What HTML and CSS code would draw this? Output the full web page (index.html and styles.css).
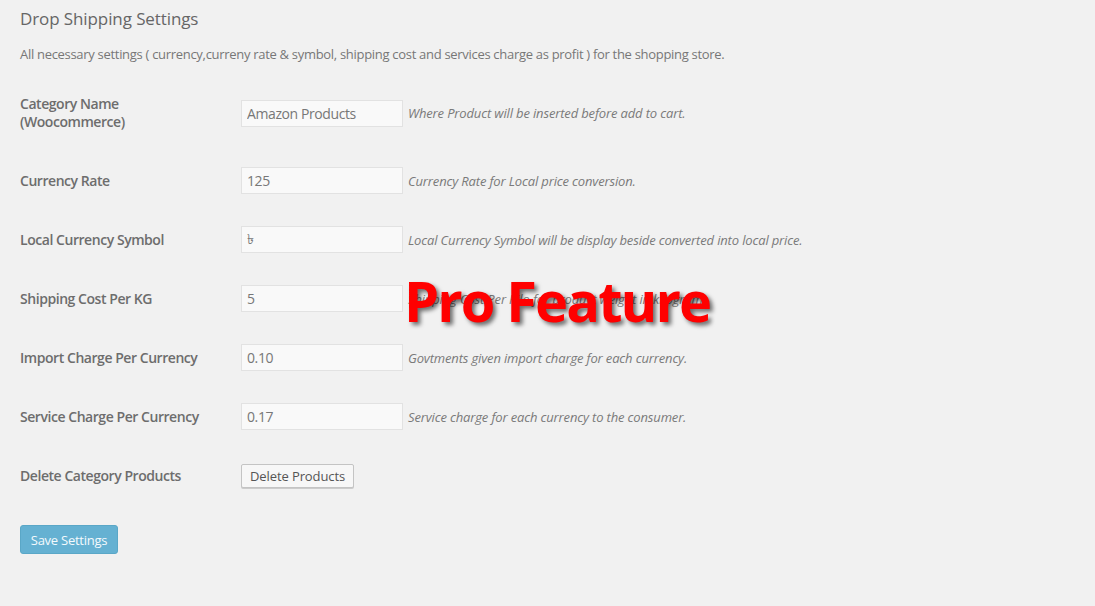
FILE: index.html
```html
<!DOCTYPE html>
<html lang="en">
<head>
<meta charset="utf-8">
<title>Drop Shipping Settings</title>
<link rel="stylesheet" href="styles.css">
</head>
<body>
<div class="wrap">
  <h2 class="title">Drop Shipping Settings</h2>
  <p class="intro">All necessary settings ( currency,curreny rate &amp; symbol, shipping cost and services charge as profit ) for the shopping store.</p>
  <div class="form">
    <div class="row row-tall">
      <div class="label">Category Name<br>(Woocommerce)</div>
      <div class="field"><input class="text" type="text" value="Amazon Products"><span class="desc">Where Product will be inserted before add to cart.</span></div>
    </div>
    <div class="row">
      <div class="label">Currency Rate</div>
      <div class="field"><input class="text" type="text" value="125"><span class="desc">Currency Rate for Local price conversion.</span></div>
    </div>
    <div class="row">
      <div class="label">Local Currency Symbol</div>
      <div class="field"><input class="text" type="text" value="৳"><span class="desc">Local Currency Symbol will be display beside converted into local price.</span></div>
    </div>
    <div class="row">
      <div class="label">Shipping Cost Per KG</div>
      <div class="field"><input class="text" type="text" value="5"><span class="desc">Shipping Cost Per Kilo for product weight in kilogram.</span>
        <span class="pro">Pro Feature</span></div>
    </div>
    <div class="row">
      <div class="label">Import Charge Per Currency</div>
      <div class="field"><input class="text" type="text" value="0.10"><span class="desc">Govtments given import charge for each currency.</span></div>
    </div>
    <div class="row">
      <div class="label">Service Charge Per Currency</div>
      <div class="field"><input class="text" type="text" value="0.17"><span class="desc">Service charge for each currency to the consumer.</span></div>
    </div>
    <div class="row">
      <div class="label">Delete Category Products</div>
      <div class="field"><button class="btn" type="button">Delete Products</button></div>
    </div>
  </div>
  <div class="submit"><button class="btn-primary" type="button">Save Settings</button></div>
</div>
</body>
</html>
```
FILE: styles.css
```css
html, body {
  margin: 0;
  padding: 0;
  background: #f1f1f1;
}
body {
  font-family: "Open Sans", "Noto Sans", sans-serif;
  color: #666;
  font-size: 13px;
}
.wrap {
  padding: 0 20px;
}
.title {
  margin: 0;
  padding-top: 7px;
  font-size: 17px;
  line-height: 24px;
  font-weight: 400;
  letter-spacing: -0.1px;
  color: #666;
}
.intro {
  margin: 13px 0 0;
  font-size: 13px;
  line-height: 20px;
  letter-spacing: -0.3px;
  color: #777;
}
.form {
  margin-top: 11px;
}
.row {
  display: flex;
  align-items: center;
  min-height: 59px;
}
.row-tall {
  min-height: 76px;
}
.label {
  width: 221px;
  flex: none;
  font-size: 14px;
  line-height: 18px;
  font-weight: 600;
  letter-spacing: -0.45px;
  color: #6d6d6d;
}
.field {
  position: relative;
  display: flex;
  align-items: center;
}
.text {
  box-sizing: border-box;
  width: 162px;
  height: 27px;
  margin: 0;
  padding: 0 5px;
  border: 1px solid #e2e2e2;
  background: #f9f9f9;
  font-family: inherit;
  font-size: 14px;
  letter-spacing: -0.4px;
  color: #777;
  outline: none;
}
.desc {
  margin-left: 5px;
  font-style: italic;
  font-size: 13px;
  letter-spacing: -0.15px;
  color: #7a7a7a;
}
.btn {
  height: 24px;
  padding: 0 8px;
  border: 1px solid #c4c4c4;
  border-radius: 2px;
  background: #f7f7f7;
  box-shadow: 0 1px 0 #ccc;
  font-family: inherit;
  font-size: 13px;
  letter-spacing: -0.1px;
  color: #555;
}
.submit {
  margin-top: 20px;
}
.btn-primary {
  width: 98px;
  height: 29px;
  padding: 0;
  border: 1px solid #5aa7c7;
  border-radius: 3px;
  background: #65b1d2;
  font-family: inherit;
  font-size: 13px;
  letter-spacing: -0.25px;
  color: #f4fafd;
}
.pro {
  position: absolute;
  left: 163px;
  top: -15px;
  font-family: "Open Sans", sans-serif;
  font-weight: 700;
  font-size: 56px;
  line-height: 60px;
  letter-spacing: -1.9px;
  color: #ff0000;
  white-space: nowrap;
  text-shadow: 3px 3px 4px rgba(0, 0, 0, 0.55);
}
```
